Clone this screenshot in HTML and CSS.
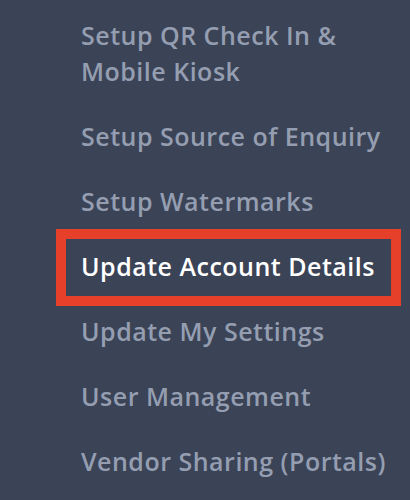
FILE: index.html
```html
<!DOCTYPE html>
<html lang="en">
  <head>
    <meta charset="UTF-8" />
    <meta name="viewport" content="width=device-width, initial-scale=1.0" />
    <title>Settings Menu</title>
    <link rel="stylesheet" href="styles.css">
  </head>
  <body>
    <nav class="side-menu">
      <a href="#">Setup QR Check In &amp; Mobile Kiosk</a>
      <a href="#">Setup Source of Enquiry</a>
      <a href="#">Setup Watermarks</a>
      <a href="#" class="active">Update Account Details</a>
      <a href="#">Update My Settings</a>
      <a href="#">User Management</a>
      <a href="#">Vendor Sharing (Portals)</a>
    </nav>
  </body>
</html>
```

FILE: styles.css
```css
* {
  margin: 0;
  padding: 0;
  box-sizing: border-box;
}

body {
  background: #3b4356;
  font-family: "Open Sans", "Noto Sans", sans-serif;
  min-height: 100vh;
  overflow: hidden;
}

/* 사이드 메뉴 */
.side-menu {
  display: flex;
  flex-direction: column;
  gap: 29px;
  padding: 17px 9px 0 81px;
}

.side-menu a {
  display: block;
  color: #959eb1;
  font-size: 25px;
  font-weight: 600;
  letter-spacing: 0.5px;
  line-height: 36px;
  text-decoration: none;
}

/* 선택된 항목 */
.side-menu a.active {
  color: #ffffff;
  border: 10px solid #e6402a;
  padding: 9px 15px 12px;
  margin: -19px 0 -22px -25px;
}
```
